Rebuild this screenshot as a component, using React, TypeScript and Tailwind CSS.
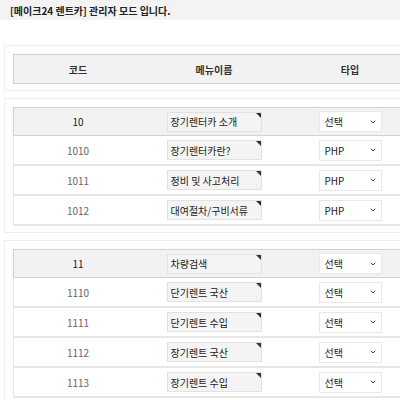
import { ChevronDown } from "lucide-react"

type Row = { code: string; name: string; type: string; group?: boolean }

const groups: Row[][] = [
  [
    { code: "10", name: "장기렌터카 소개", type: "선택", group: true },
    { code: "1010", name: "장기렌터카란?", type: "PHP" },
    { code: "1011", name: "정비 및 사고처리", type: "PHP" },
    { code: "1012", name: "대여절차/구비서류", type: "PHP" },
  ],
  [
    { code: "11", name: "차량검색", type: "선택", group: true },
    { code: "1110", name: "단기렌트 국산", type: "선택" },
    { code: "1111", name: "단기렌트 수입", type: "선택" },
    { code: "1112", name: "장기렌트 국산", type: "선택" },
    { code: "1113", name: "장기렌트 수입", type: "선택" },
  ],
]

function NameInput({ value }: { value: string }) {
  return (
    <div className="relative w-[95px] h-[20px] bg-[#f4f4f4] border border-[#e2e2e2] flex items-center px-[3px] text-[10px] text-[#222]">
      {value}
      <span className="absolute top-0 right-0 w-0 h-0 border-t-[5px] border-l-[5px] border-t-[#333] border-l-transparent" />
    </div>
  )
}

function TypeSelect({ value }: { value: string }) {
  return (
    <div className="w-[63px] h-[21px] bg-white border border-[#e8e8e8] flex items-center justify-between pl-[5px] pr-[4px] text-[10px] text-[#222]">
      <span>{value}</span>
      <ChevronDown className="w-[8px] h-[8px] text-[#444]" strokeWidth={3} />
    </div>
  )
}

function TableRow({ row }: { row: Row }) {
  return (
    <div
      className={
        row.group
          ? "grid grid-cols-[128px_144px_128px_40px] h-[29px] bg-[#f2f2f2] border border-[#d2d2d2] shadow-[0_1px_2px_rgba(0,0,0,0.12)]"
          : "grid grid-cols-[128px_144px_128px_40px] h-[30px] bg-white border-l border-[#e6e6e6] border-b-2"
      }
    >
      <div className={row.group ? "flex items-center justify-center text-[10px] text-[#222]" : "flex items-center justify-center text-[10px] text-[#666]"}>
        {row.code}
      </div>
      <div className="flex items-center justify-center">
        <NameInput value={row.name} />
      </div>
      <div className="flex items-center justify-center">
        <TypeSelect value={row.type} />
      </div>
      <div />
    </div>
  )
}

export default function App() {
  return (
    <div className="w-[400px] h-[400px] overflow-hidden bg-white font-['Noto_Sans_CJK_KR',sans-serif]">
      <div className="h-[20px] bg-[#f3f3f3] flex items-center pl-[10px] text-[10px] font-bold text-[#222]">
        [메이크24 렌트카] 관리자 모드 입니다.
      </div>
      <div className="w-[460px] pt-[25px] pl-[4px] flex flex-col gap-[7px]">
        <div className="border border-[#efefef] p-[8px] pb-[6px]">
          <div className="grid grid-cols-[128px_144px_128px_40px] h-[30px] bg-[#f2f2f2] border border-[#cfcfcf] text-[10px] font-bold text-[#333]">
            <div className="flex items-center justify-center">코드</div>
            <div className="flex items-center justify-center">메뉴이름</div>
            <div className="flex items-center justify-center">타입</div>
            <div />
          </div>
        </div>
        {groups.map((g, i) => (
          <div key={i} className="border border-[#efefef] p-[8px] pb-[6px]">
            {g.map((r) => (
              <TableRow key={r.code} row={r} />
            ))}
          </div>
        ))}
      </div>
    </div>
  )
}
